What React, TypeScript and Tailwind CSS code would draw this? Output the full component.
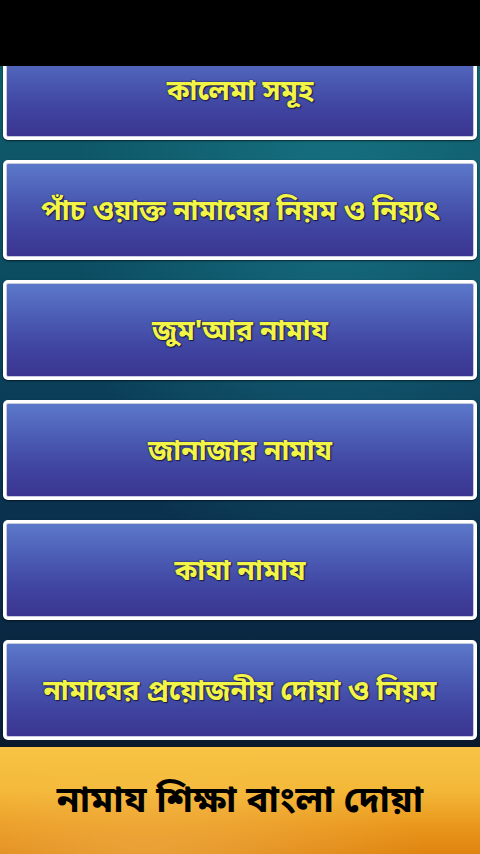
import React from "react";

const items = [
  "কালেমা সমূহ",
  "পাঁচ ওয়াক্ত নামাযের নিয়ম ও নিয়্যৎ",
  "জুম'আর নামায",
  "জানাজার নামায",
  "কাযা নামায",
  "নামাযের প্রয়োজনীয় দোয়া ও নিয়ম",
];

const font = { fontFamily: '"Noto Sans Bengali", "Noto Sans", "DejaVu Sans", sans-serif' };

export default function App() {
  return (
    <div className="w-[480px] h-[854px] flex flex-col bg-black overflow-hidden" style={font}>
      <div className="h-[66px] bg-black shrink-0" />
      <div className="flex-1 overflow-hidden bg-[linear-gradient(180deg,#0f5e6c_0%,#0c4d62_30%,#0a3552_60%,#0a1f38_100%)] relative">
        <div className="absolute inset-0 bg-[radial-gradient(ellipse_at_70%_20%,rgba(40,170,180,0.3),transparent_55%)]" />
        <div className="relative flex flex-col gap-[20px] px-[3px] -mt-[26px]">
          {items.map((t) => (
            <div
              key={t}
              className="h-[100px] rounded-[5px] bg-white p-[3px] shadow-[0_1px_2px_rgba(0,0,0,0.6)]"
            >
              <div className="h-full w-full rounded-[2px] border border-[#c8cbe0] bg-[linear-gradient(180deg,#5b78c9_0%,#4c5db5_35%,#3f44a0_70%,#3b3590_100%)] flex items-center justify-center">
                <span
                  className="text-[28px] font-bold text-[#f2f545] leading-none mt-[6px]"
                  style={{ textShadow: "0 0 2px #1a1a40, 1px 1px 1px #1a1a40" }}
                >
                  {t}
                </span>
              </div>
            </div>
          ))}
        </div>
      </div>
      <div className="h-[7px] bg-[#0a1a2c] shrink-0" />
      <div className="h-[107px] shrink-0 relative bg-[linear-gradient(180deg,#f7c445_0%,#f4b838_40%,#e9961c_75%,#df8410_100%)] flex items-center justify-center overflow-hidden">
        <div className="absolute inset-0 bg-[radial-gradient(ellipse_at_30%_110%,rgba(255,220,140,0.35),transparent_60%)]" />
        <span className="relative text-[37px] font-bold text-black leading-none mt-[4px]">
          নামায শিক্ষা বাংলা দোয়া
        </span>
      </div>
    </div>
  );
}
